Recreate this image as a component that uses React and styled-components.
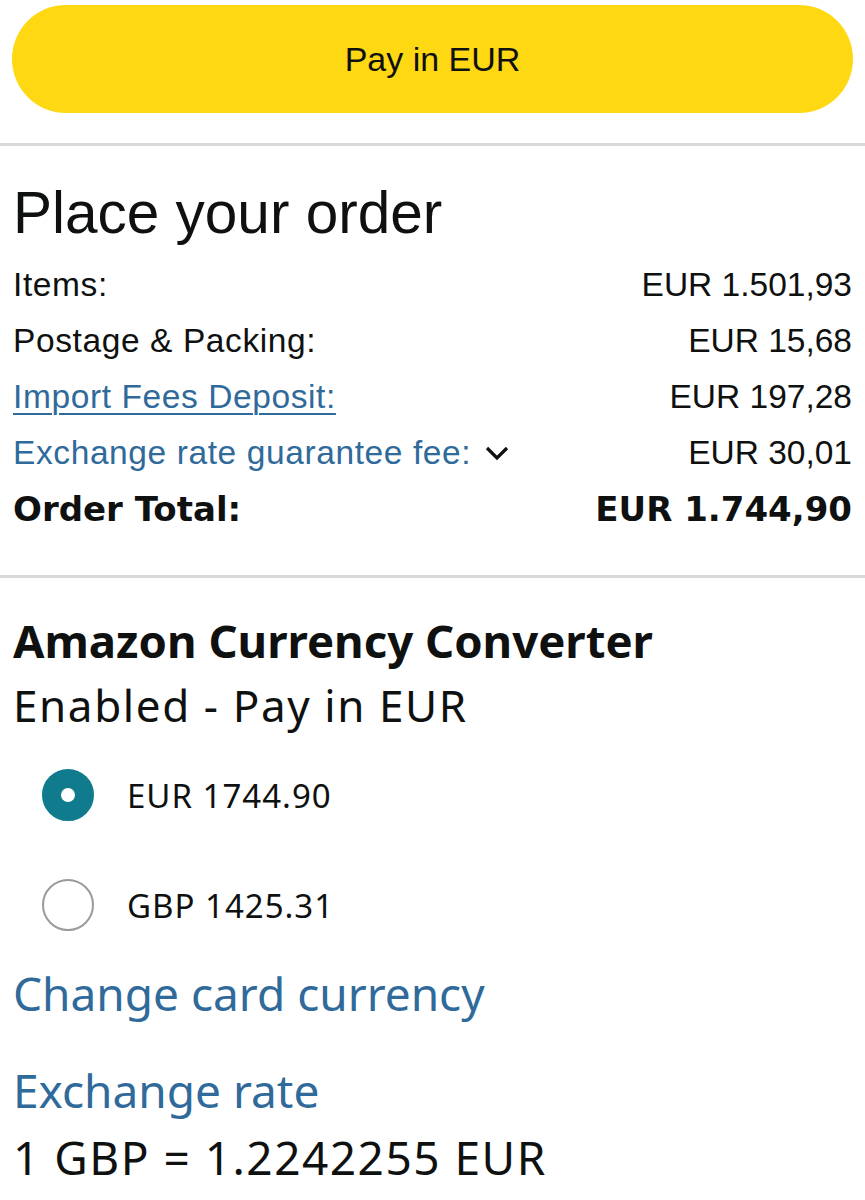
import React from 'react';
import styled, { createGlobalStyle } from 'styled-components';

const GlobalStyle = createGlobalStyle`
  body {
    margin: 0;
    background: #fff;
    color: #0f1111;
    font-family: "Liberation Sans", Arial, sans-serif;
  }
`;

const Page = styled.div`
  width: 865px;
`;

const ButtonWrap = styled.div`
  padding: 5px 12px 30px;
`;

const PayButton = styled.button`
  display: flex;
  align-items: center;
  justify-content: center;
  width: 100%;
  height: 108px;
  border: none;
  border-radius: 54px;
  background: #ffd814;
  color: #0f1111;
  font-family: "Liberation Sans", Arial, sans-serif;
  font-size: 34px;
`;

const Divider = styled.div`
  height: 3px;
  background: #d5d9d9;
`;

const Summary = styled.section`
  padding: 35px 13px 38px;
`;

const Title = styled.h1`
  margin: 0 0 12px;
  font-size: 58.5px;
  font-weight: 400;
  line-height: 64px;
`;

const Row = styled.div`
  display: flex;
  justify-content: space-between;
  align-items: center;
  height: 56px;
  font-size: 33.5px;
`;

const TotalRow = styled(Row)`
  font-family: "DejaVu Sans", "Noto Sans", sans-serif;
  font-size: 34px;
  font-weight: 700;
`;

const Label = styled.span`
  display: flex;
  align-items: center;
  gap: 13px;
  letter-spacing: 0.6px;
  color: ${p => (p.$link ? '#2f6a9a' : 'inherit')};
  text-decoration: ${p => (p.$underline ? 'underline' : 'none')};
  text-underline-offset: 5px;
  text-decoration-thickness: 2px;
`;

const Converter = styled.section`
  padding: 34px 13px 40px;
  font-family: "Noto Sans", "Open Sans", sans-serif;
`;

const ConvTitle = styled.h2`
  margin: 0;
  font-size: 45.5px;
  font-weight: 700;
  line-height: 56px;
`;

const Status = styled.div`
  margin-top: 9px;
  font-size: 44px;
  letter-spacing: 1.6px;
  line-height: 56px;
`;

const Options = styled.div`
  display: flex;
  flex-direction: column;
  gap: 40px;
  margin-top: 27px;
  padding-left: 29px;
`;

const Option = styled.label`
  display: flex;
  align-items: center;
  gap: 33px;
  height: 70px;
  font-size: 33px;
  letter-spacing: 1px;
`;

const Radio = styled.span`
  box-sizing: border-box;
  width: 52px;
  height: 52px;
  border-radius: 50%;
  border: ${p => (p.$checked ? '19px solid #0f7b8c' : '2px solid #9a9a9a')};
  background: #fff;
`;

const Link = styled.div`
  margin-top: ${p => p.$gap}px;
  color: #2f6a9a;
  font-size: 46px;
  line-height: 60px;
`;

const Rate = styled.div`
  margin-top: 9px;
  font-size: 46px;
  letter-spacing: 1.5px;
  line-height: 56px;
`;

const Chevron = () => (
  <svg width="26" height="16" viewBox="0 0 26 16">
    <polyline points="3,3 13,13 23,3" fill="none" stroke="#0f1111" strokeWidth="3.2" />
  </svg>
);

const rows = [
  { label: 'Items:', value: 'EUR 1.501,93' },
  { label: 'Postage & Packing:', value: 'EUR 15,68' },
  { label: 'Import Fees Deposit:', value: 'EUR 197,28', link: true, underline: true },
  { label: 'Exchange rate guarantee fee:', value: 'EUR 30,01', link: true, chevron: true },
];

export default function App() {
  return (
    <Page>
      <GlobalStyle />
      <ButtonWrap>
        <PayButton>Pay in EUR</PayButton>
      </ButtonWrap>
      <Divider />
      <Summary>
        <Title>Place your order</Title>
        {rows.map(r => (
          <Row key={r.label}>
            <Label $link={r.link} $underline={r.underline}>
              {r.label}
              {r.chevron && <Chevron />}
            </Label>
            <span>{r.value}</span>
          </Row>
        ))}
        <TotalRow>
          <span>Order Total:</span>
          <span>EUR 1.744,90</span>
        </TotalRow>
      </Summary>
      <Divider />
      <Converter>
        <ConvTitle>Amazon Currency Converter</ConvTitle>
        <Status>Enabled - Pay in EUR</Status>
        <Options>
          <Option>
            <Radio $checked />
            EUR 1744.90
          </Option>
          <Option>
            <Radio />
            GBP 1425.31
          </Option>
        </Options>
        <Link $gap={23}>Change card currency</Link>
        <Link $gap={37}>Exchange rate</Link>
        <Rate>1 GBP = 1.2242255 EUR</Rate>
      </Converter>
    </Page>
  );
}
